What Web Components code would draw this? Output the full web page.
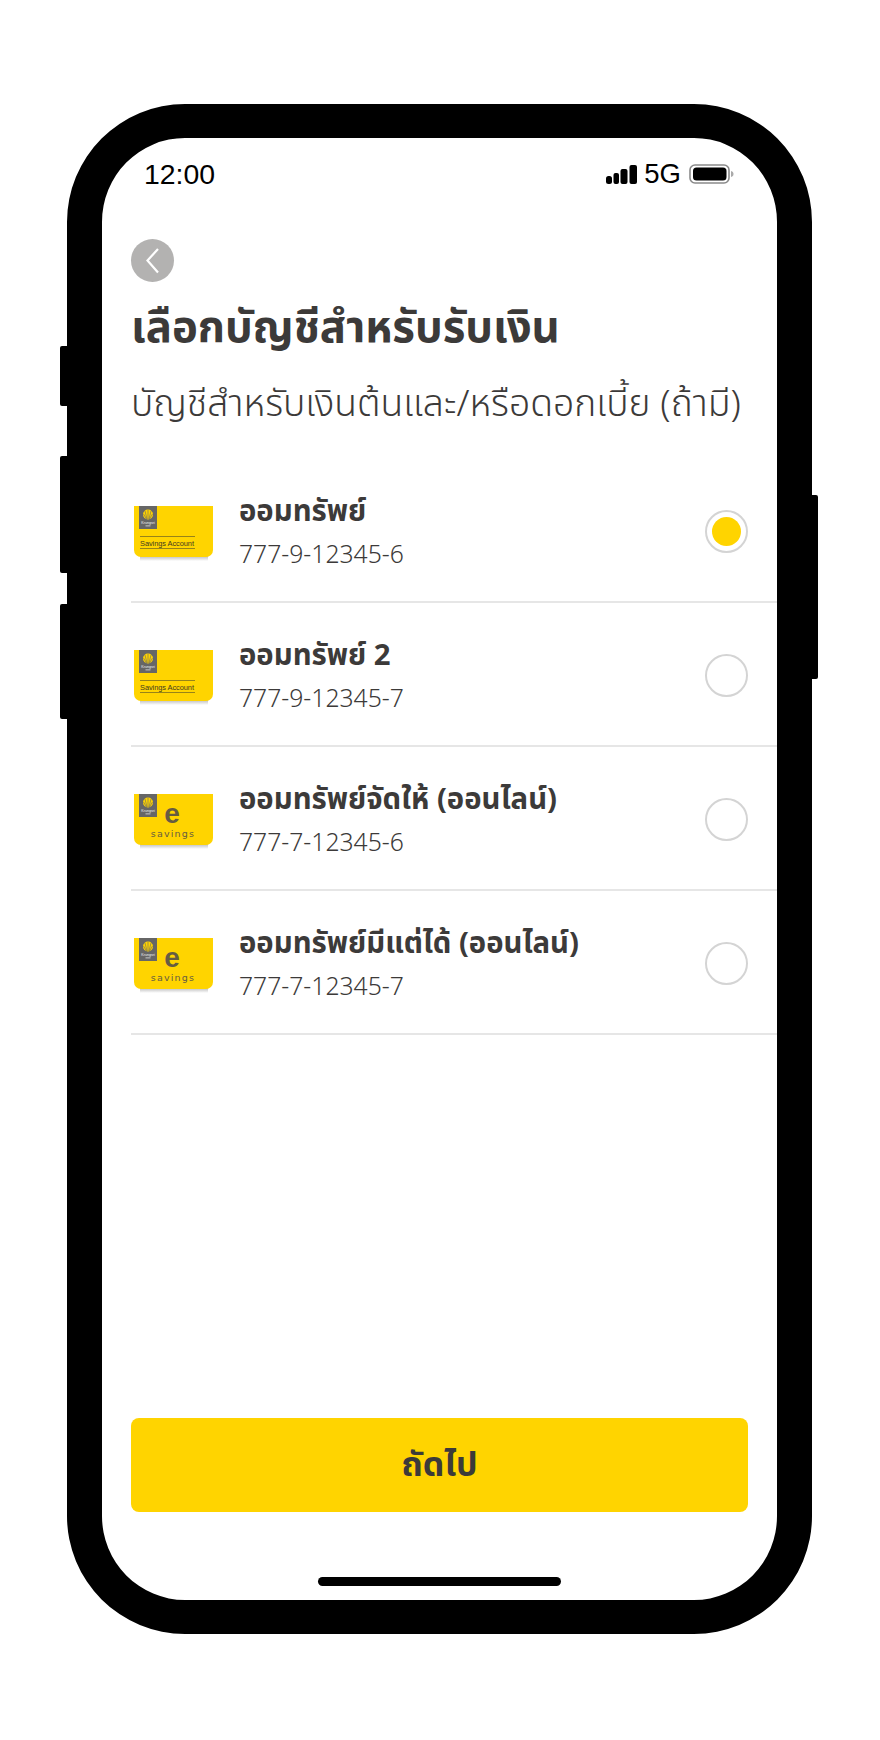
<!DOCTYPE html>
<html lang="th">
<head>
<meta charset="utf-8">
<title>เลือกบัญชีสำหรับรับเงิน</title>
<style>
  html, body { margin: 0; background: #fff; }
  body { font-family: "Noto Sans", "Noto Sans Thai", "Liberation Sans", sans-serif; color: #3c3a39; }
</style>
</head>
<body>
<phone-frame>
  <status-bar></status-bar>
  <back-button></back-button>
  <page-heading title="เลือกบัญชีสำหรับรับเงิน" subtitle="บัญชีสำหรับเงินต้นและ/หรือดอกเบี้ย (ถ้ามี)"></page-heading>
  <account-list>
    <account-row kind="savings" name="ออมทรัพย์" number="777-9-12345-6" selected></account-row>
    <account-row kind="savings" name="ออมทรัพย์ 2" number="777-9-12345-7"></account-row>
    <account-row kind="e" name="ออมทรัพย์จัดให้ (ออนไลน์)" number="777-7-12345-6"></account-row>
    <account-row kind="e" name="ออมทรัพย์มีแต่ได้ (ออนไลน์)" number="777-7-12345-7"></account-row>
  </account-list>
  <next-button>ถัดไป</next-button>
  <home-bar></home-bar>
</phone-frame>

<script>
class PhoneFrame extends HTMLElement {
  constructor() {
    super();
    this.attachShadow({ mode: "open" });
    this.shadowRoot.innerHTML = `
    <style>
      :host { display: block; position: relative; box-sizing: border-box; width: 745px; height: 1530px; margin: 104px 0 0 67px; }
      .screen {
        box-sizing: border-box;
        height: 100%;
        border: solid #000;
        border-width: 34px 35px;
        border-radius: 118px;
        background: #fff;
        display: flex;
        flex-direction: column;
        padding: 0 0 0 29px;
      }
      .side { position: absolute; background: #000; }
      .l { left: -7px; width: 8px; border-radius: 2px 0 0 2px; }
      .r { right: -6px; width: 7px; top: 391px; height: 184px; border-radius: 0 2px 2px 0; }
    </style>
    <div class="side l" style="top:242px;height:60px"></div>
    <div class="side l" style="top:352px;height:117px"></div>
    <div class="side l" style="top:500px;height:115px"></div>
    <div class="side r"></div>
    <div class="screen"><slot></slot></div>`;
  }
}

class StatusBar extends HTMLElement {
  constructor() {
    super();
    this.attachShadow({ mode: "open" });
    this.shadowRoot.innerHTML = `
    <style>
      :host { display: flex; align-items: center; justify-content: space-between; height: 38px; margin: 17px 0 0 13px; padding-right: 43px; font: 28.4px "Liberation Sans", sans-serif; color: #000; }
      .right { display: flex; align-items: center; gap: 7px; }
      .net { font-size: 27.5px; margin-right: 1px; }
      svg { display: block; }
    </style>
    <span>12:00</span>
    <div class="right">
      <svg width="31" height="19" viewBox="0 0 31 19">
        <rect x="0" y="11" width="6" height="8" rx="2.500"/>
        <rect x="7.500" y="8" width="5.500" height="11" rx="2"/>
        <rect x="14.500" y="4" width="7" height="15" rx="2"/>
        <rect x="23.500" y="0" width="7.500" height="19" rx="2"/>
      </svg>
      <span class="net">5G</span>
      <svg width="45" height="20" viewBox="0 0 45 20">
        <rect x="1" y="1" width="39" height="18" rx="5" fill="none" stroke="#8a8a8a" stroke-width="1.600"/>
        <rect x="4" y="3.500" width="33.500" height="13" rx="3.500"/>
        <path d="M42 7c1.700 .4 2.500 1.500 2.500 3s-.8 2.600-2.500 3z" fill="#aaa"/>
      </svg>
    </div>`;
  }
}

class BackButton extends HTMLElement {
  constructor() {
    super();
    this.attachShadow({ mode: "open" });
    this.shadowRoot.innerHTML = `
    <style>
      :host { display: flex; align-items: center; justify-content: center; width: 43px; height: 43px; margin-top: 46px; border-radius: 50%; background: #b3b2b1; }
    </style>
    <svg width="16" height="28" viewBox="0 0 16 28"><path d="M13 2 2.500 13.500 13 25.500" fill="none" stroke="#fff" stroke-width="2.200"/></svg>`;
  }
}

class PageHeading extends HTMLElement {
  constructor() {
    super();
    this.attachShadow({ mode: "open" });
  }

  connectedCallback() {
    this.shadowRoot.innerHTML = `
    <style>
      :host { display: block; margin-top: 10px; color: #3c3a39; white-space: nowrap; }
      h1 { margin: 0; font-size: 43.7px; line-height: 66px; font-weight: 700; }
      p { margin: 12px 0 0; font-size: 37.3px; line-height: 64px; font-weight: 300; }
    </style>
    <h1>${this.getAttribute("title")}</h1>
    <p>${this.getAttribute("subtitle")}</p>`;
  }
}

class AccountList extends HTMLElement {
  constructor() {
    super();
    this.attachShadow({ mode: "open" });
    this.shadowRoot.innerHTML = `
    <style>:host { display: block; margin-top: 25px; }</style>
    <slot></slot>`;
  }
}

class AccountRow extends HTMLElement {
  constructor() {
    super();
    this.attachShadow({ mode: "open" });
  }

  static card(kind) {
    const logo = `
      <rect x="5" y="0" width="18" height="23" fill="#666"/>
      <circle cx="14" cy="8.500" r="5" fill="#ffd400"/>
      <path d="M14 4v9M11 5l2 8M17 5l-2 8M9.500 8l3 5M18.500 8l-3 5" stroke="#666" stroke-width=".6"/>
      <text x="14" y="18" text-anchor="middle" font-family="Liberation Sans, sans-serif" font-size="3.600" fill="#f2f2f2">Krungsri</text>
      <rect x="11.500" y="19.500" width="5" height=".8" fill="#ddd"/>`;
    const body = kind === "e" ? `
      <text x="38" y="28.500" text-anchor="middle" font-family="Liberation Sans, sans-serif" font-weight="700" font-size="28" fill="#665c42">e</text>
      <text x="39" y="43" text-anchor="middle" font-family="DejaVu Sans, sans-serif" font-size="9.500" letter-spacing="1.200" fill="#665c42">savings</text>` : `
      <rect x="6" y="30" width="55" height=".8" fill="#7d6f20"/>
      <rect x="6" y="42" width="55" height=".8" fill="#7d6f20"/>
      <text x="6" y="39.800" font-family="Liberation Sans, sans-serif" font-size="7.400" textLength="54" lengthAdjust="spacing" fill="#3f3a20">Savings Account</text>`;
    return `<svg width="80" height="56" viewBox="0 0 80 56">
      <defs><linearGradient id="s" x1="0" y1="0" x2="0" y2="1"><stop offset="0" stop-color="#bbb"/><stop offset="1" stop-color="#fff"/></linearGradient></defs>
      <rect x="6" y="50" width="68" height="5" fill="url(#s)"/>
      <path d="M0 0h79v44a7 7 0 0 1-7 7H7a7 7 0 0 1-7-7z" fill="#ffd400"/>
      ${logo}${body}
    </svg>`;
  }

  connectedCallback() {
    const on = this.hasAttribute("selected");
    this.shadowRoot.innerHTML = `
    <style>
      :host { display: flex; align-items: center; height: 142px; border-bottom: 2px solid #e6e6e6; }
      .card { width: 80px; height: 56px; margin: 8px 0 0 3px; flex: none; }
      .card svg { display: block; }
      .text { margin: 2px 0 0 25px; flex: 1; min-width: 0; white-space: nowrap; }
      .name { font-size: 29.3px; line-height: 42px; font-weight: 700; color: #3c3a39; }
      .number { margin-top: 3px; font-size: 24.7px; line-height: 40px; font-weight: 300; color: #3c3a39; }
      .radio { box-sizing: border-box; width: 43px; height: 43px; margin: 2px 29px 0 0; border-radius: 50%; border: 2px solid #d4d4d4; display: flex; align-items: center; justify-content: center; }
      .dot { width: 29px; height: 29px; border-radius: 50%; background: #ffd400; }
    </style>
    <div class="card">${AccountRow.card(this.getAttribute("kind"))}</div>
    <div class="text">
      <div class="name">${this.getAttribute("name")}</div>
      <div class="number">${this.getAttribute("number")}</div>
    </div>
    <div class="radio">${on ? '<div class="dot"></div>' : ""}</div>`;
  }
}

class NextButton extends HTMLElement {
  constructor() {
    super();
    this.attachShadow({ mode: "open" });
    this.shadowRoot.innerHTML = `
    <style>
      :host { display: flex; align-items: center; justify-content: center; box-sizing: border-box; width: 617px; height: 94px; margin-top: auto; border-radius: 8px; background: #ffd400; color: #3c3a39; font-size: 34px; font-weight: 700; }
    </style>
    <slot></slot>`;
  }
}

class HomeBar extends HTMLElement {
  constructor() {
    super();
    this.attachShadow({ mode: "open" });
    this.shadowRoot.innerHTML = `
    <style>
      :host { display: block; width: 243px; height: 9px; margin: 65px 0 14px 187px; border-radius: 5px; background: #000; }
    </style>`;
  }
}

customElements.define("phone-frame", PhoneFrame);
customElements.define("status-bar", StatusBar);
customElements.define("back-button", BackButton);
customElements.define("page-heading", PageHeading);
customElements.define("account-list", AccountList);
customElements.define("account-row", AccountRow);
customElements.define("next-button", NextButton);
customElements.define("home-bar", HomeBar);
</script>
</body>
</html>
